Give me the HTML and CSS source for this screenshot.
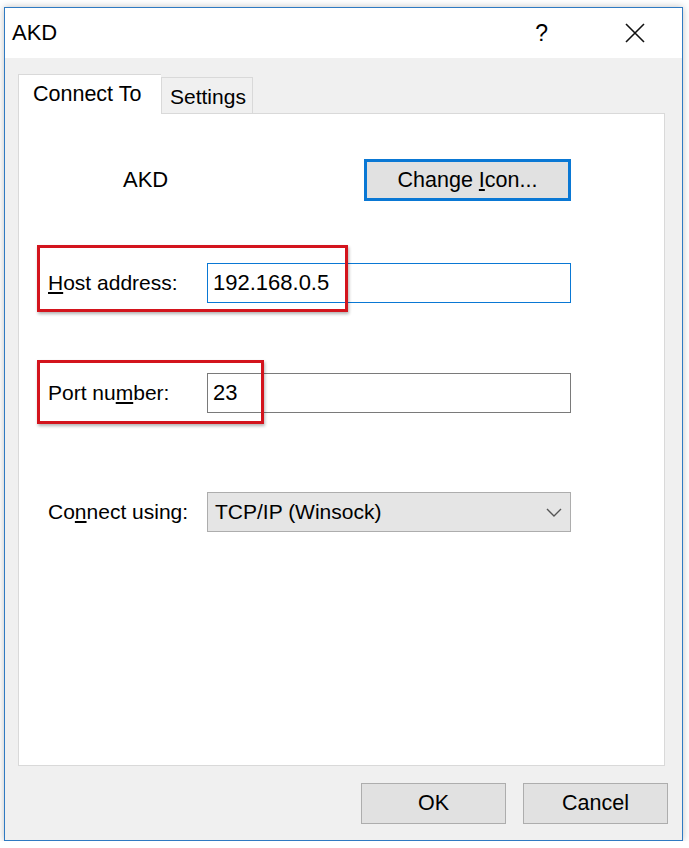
FILE: index.html
```html
<!DOCTYPE html>
<html lang="en">
<head>
  <meta charset="UTF-8" />
  <title>AKD</title>
  <link rel="stylesheet" href="styles.css">
</head>
<body>
  <div class="dialog">

    <!-- Title bar -->
    <div class="titlebar">
      <span class="title">AKD</span>
      <span class="help">?</span>
      <svg class="close" width="20" height="20" viewBox="0 0 20 20">
        <path d="M1 1 L19 19 M19 1 L1 19" stroke="#111" stroke-width="1.6" fill="none"/>
      </svg>
    </div>

    <div class="body">
      <!-- Tabs -->
      <div class="tabs">
        <div class="tab active">Connect To</div>
        <div class="tab">Settings</div>
      </div>

      <div class="panel">
        <div class="row icon-row">
          <span class="name">AKD</span>
          <button class="btn focused">Change <u>I</u>con...</button>
        </div>

        <div class="row field host-row">
          <label class="label"><u>H</u>ost address:</label>
          <div class="input focus">192.168.0.5</div>
          <div class="mark mark-host"></div>
        </div>

        <div class="row field port-row">
          <label class="label">Port nu<u>m</u>ber:</label>
          <div class="input">23</div>
          <div class="mark mark-port"></div>
        </div>

        <div class="row field using-row">
          <label class="label">Co<u>n</u>nect using:</label>
          <div class="combo">
            <span>TCP/IP (Winsock)</span>
            <svg width="16" height="9" viewBox="0 0 16 9">
              <path d="M1 1 L8 8 L15 1" stroke="#555" stroke-width="1.4" fill="none"/>
            </svg>
          </div>
        </div>
      </div>

      <div class="footer">
        <button class="btn">OK</button>
        <button class="btn">Cancel</button>
      </div>
    </div>

  </div>
</body>
</html>
```

FILE: styles.css
```css
body {
  margin: 0;
  background: #fff;
  font-family: "Liberation Sans", Arial, sans-serif;
  font-size: 21px;
  color: #000;
  white-space: nowrap;
}

.dialog {
  margin: 7px 6px 0 4px;
  height: 832px;
  border: 1px solid #2f7ac2;
  box-shadow: 0 0 7px rgba(0,0,0,0.25);
  display: flex;
  flex-direction: column;
}

.titlebar {
  height: 50px;
  background: #fff;
  display: flex;
  align-items: center;
  padding-left: 7px;
}

.title {
  flex: 1;
  font-size: 22px;
}

.help {
  margin-right: 77px;
  font-size: 23px;
}

.close {
  margin-right: 37px;
}

.body {
  flex: 1;
  background: #f0f0f0;
  padding: 16px 17px 0 13px;
  display: flex;
  flex-direction: column;
}

.tabs {
  display: flex;
  align-items: flex-end;
  height: 40px;
  margin-bottom: -1px;
  position: relative;
  z-index: 1;
}

.tab {
  height: 36px;
  padding: 0 8px;
  border: 1px solid #d9d9d9;
  border-bottom: none;
  background: #f0f0f0;
  display: flex;
  align-items: center;
  font-size: 21px;
  box-sizing: border-box;
  width: 92px;
  margin-bottom: 1px;
  padding-top: 3px;
}

.tab.active {
  height: 40px;
  width: 143px;
  background: #fff;
  padding-left: 14px;
  padding-top: 0;
  margin-bottom: 0;
  border-right: none;
  font-size: 21.5px;
}

.panel {
  height: 651px;
  background: #fff;
  border: 1px solid #d9d9d9;
  padding: 0 93px 0 29px;
}

.row {
  display: flex;
  align-items: center;
  position: relative;
}

.icon-row {
  margin-top: 45px;
  justify-content: space-between;
}

.name {
  margin-left: 75px;
  font-size: 22px;
}

.btn {
  font-family: inherit;
  font-size: 21.5px;
  color: #000;
  background: #e1e1e1;
  border: 1px solid #adadad;
  width: 145px;
  height: 41px;
  padding: 0;
}

.btn.focused {
  width: 207px;
  height: 42px;
  border: 3px solid #0a78d4;
}

.host-row {
  margin-top: 62px;
}

.port-row {
  margin-top: 70px;
}

.using-row {
  margin-top: 79px;
}

.label {
  width: 159px;
  flex: none;
}

.input {
  flex: 1;
  height: 40px;
  box-sizing: border-box;
  border: 1px solid #7a7a7a;
  padding-left: 5px;
  display: flex;
  align-items: center;
  font-size: 22px;
}

.input.focus {
  border-color: #0a78d4;
}

.combo {
  flex: 1;
  height: 40px;
  box-sizing: border-box;
  background: #e5e5e5;
  border: 1px solid #adadad;
  display: flex;
  align-items: center;
  justify-content: space-between;
  padding: 0 8px 0 7px;
}

.mark {
  position: absolute;
  border: 3px solid #d3141d;
  box-shadow: 1px 2px 3px rgba(0,0,0,0.3);
  box-sizing: border-box;
  pointer-events: none;
}

.mark-host {
  left: -11px;
  top: -18px;
  width: 311px;
  height: 67px;
}

.mark-port {
  left: -11px;
  top: -13px;
  width: 227px;
  height: 64px;
}

.footer {
  display: flex;
  justify-content: flex-end;
  gap: 17px;
  padding-top: 17px;
  margin-right: -3px;
}
```
